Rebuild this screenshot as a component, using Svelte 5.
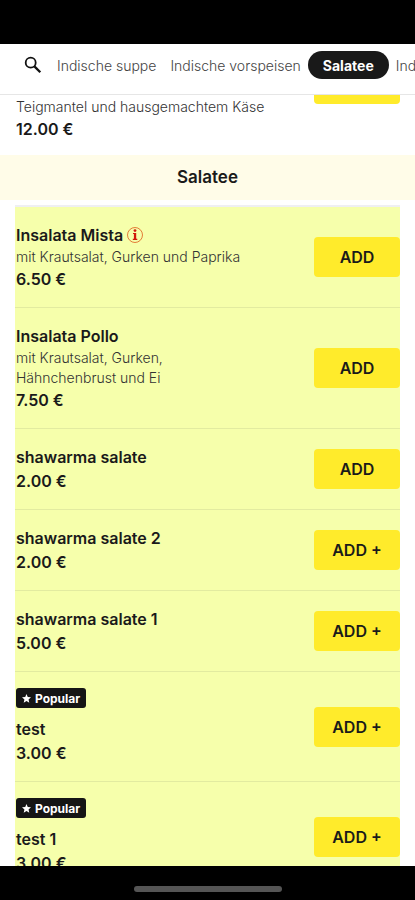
<script>
  const categories = ['Indische suppe', 'Indische vorspeisen', 'Salatee', 'Indische reis']
  let active = $state('Salatee')

  const items = [
    { name: 'Insalata Mista', description: 'mit Krautsalat, Gurken und Paprika', price: '6.50 €', info: true },
    { name: 'Insalata Pollo', description: 'mit Krautsalat, Gurken, Hähnchenbrust und Ei', price: '7.50 €' },
    { name: 'shawarma salate', price: '2.00 €' },
    { name: 'shawarma salate 2', price: '2.00 €', options: true },
    { name: 'shawarma salate 1', price: '5.00 €', options: true },
    { name: 'test', price: '3.00 €', options: true, popular: true },
    { name: 'test 1', price: '3.00 €', options: true, popular: true }
  ]
</script>

<div class="screen">
  <div class="status-bar"></div>

  <nav aria-label="Categories">
    <button class="search" aria-label="Search">
      <svg width="18" height="18" viewBox="0 0 18 18" fill="none" stroke="#111" aria-hidden="true">
        <circle cx="6.7" cy="6.7" r="5" stroke-width="1.8" />
        <path d="M10.4 10.4L16.3 16.3" stroke-width="2.3" />
      </svg>
    </button>
    {#each categories as category}
      <button
        class="category"
        class:active={active === category}
        aria-pressed={active === category}
        onclick={() => (active = category)}
      >
        {category}
      </button>
    {/each}
  </nav>

  <main>
    <article class="previous">
      <div class="details">
        <p class="description">Teigmantel und hausgemachtem Käse</p>
        <p class="price">12.00 €</p>
      </div>
      <button class="add" aria-label="Add"></button>
    </article>

    <h2>Salatee</h2>

    <ul>
      {#each items as item}
        <li>
          <div class="details">
            {#if item.popular}
              <span class="badge">
                <svg width="9" height="9" viewBox="0 0 10 10" fill="#fff" aria-hidden="true">
                  <path d="M5 0l1.4 3.4 3.6.3-2.7 2.4.8 3.6L5 7.8 1.9 9.7l.8-3.6L0 3.7l3.6-.3z" />
                </svg>
                Popular
              </span>
            {/if}
            <h3>
              {item.name}
              {#if item.info}
                <button class="info" aria-label="Product information">
                  <svg width="16" height="16" viewBox="0 0 16 16" aria-hidden="true">
                    <circle cx="8" cy="8" r="7.5" fill="none" stroke="#dd5a1c" stroke-width="0.8" />
                    <circle cx="8" cy="3.6" r="1.4" fill="#d01a0c" />
                    <path d="M6 5.9H9.2v5.9h1.1v1.1H5.8v-1.1H6.9V7H6z" fill="#d01a0c" />
                  </svg>
                </button>
              {/if}
            </h3>
            {#if item.description}
              <p class="description">{item.description}</p>
            {/if}
            <p class="price">{item.price}</p>
          </div>
          <button class="add">{item.options ? 'ADD +' : 'ADD'}</button>
        </li>
      {/each}
    </ul>
  </main>

  <div class="home-bar"><span></span></div>
</div>

<style>
  :global(body) {
    margin: 0;
    background: #fff;
  }

  .screen {
    display: flex;
    flex-direction: column;
    height: 100vh;
    font-family: Inter, 'Liberation Sans', sans-serif;
    color: #1a1a1a;
    background: #fff;
  }

  button {
    border: 0;
    padding: 0;
    background: none;
    font: inherit;
    color: inherit;
    cursor: pointer;
  }

  .status-bar {
    flex: none;
    height: 44px;
    background: #000;
  }

  nav {
    flex: none;
    display: flex;
    align-items: flex-start;
    padding: 7px 0 15px 24px;
    border-bottom: 1px solid #e6e6e6;
    overflow: hidden;
  }

  .search {
    flex: none;
    display: flex;
    align-items: center;
    height: 28px;
    margin-right: 8px;
  }

  .category {
    flex: none;
    height: 28px;
    padding: 0 7px;
    border-radius: 14px;
    font-size: 14px;
    font-weight: 300;
    color: #444;
    white-space: nowrap;
  }

  .category.active {
    padding: 0 15px;
    background: #191919;
    color: #fff;
    font-weight: 700;
  }

  main {
    flex: 1;
    min-height: 0;
    overflow: hidden;
  }

  p,
  h2,
  h3,
  ul {
    margin: 0;
    padding: 0;
  }

  .previous {
    display: flex;
    align-items: flex-start;
    justify-content: space-between;
    padding: 2px 15px 14px 16px;
  }

  .previous .add {
    margin-top: -33px;
  }

  h2 {
    padding: 10px 16px 11px;
    background: #fffce8;
    font-size: 17px;
    font-weight: 600;
    line-height: 24px;
    text-align: center;
  }

  ul {
    margin: 5px 15px 0;
    border-top: 2px solid #efeff2;
    list-style: none;
    background: #f6ffab;
  }

  li {
    display: flex;
    align-items: center;
    justify-content: space-between;
    padding: 16px 0 16px 1px;
    border-bottom: 1px solid #e2eba0;
  }

  .details {
    max-width: 280px;
  }

  li .details {
    max-width: 240px;
  }

  h3 {
    display: flex;
    align-items: center;
    gap: 4px;
    font-size: 16px;
    font-weight: 600;
    line-height: 24px;
  }

  .info {
    display: flex;
  }

  .description {
    font-size: 14px;
    font-weight: 300;
    line-height: 20px;
    color: #333;
  }

  .price {
    font-size: 16px;
    font-weight: 600;
    line-height: 24px;
  }

  .badge {
    display: flex;
    align-items: center;
    gap: 4px;
    width: max-content;
    height: 20px;
    margin-bottom: 9px;
    padding: 0 6px;
    border-radius: 3px;
    background: #151515;
    color: #fff;
    font-size: 12px;
    font-weight: 700;
  }

  .add {
    flex: none;
    width: 86px;
    height: 40px;
    border-radius: 4px;
    background: #ffeb2b;
    font-size: 16px;
    font-weight: 600;
  }

  .home-bar {
    flex: none;
    display: flex;
    justify-content: center;
    align-items: center;
    height: 34px;
    background: #000;
  }

  .home-bar span {
    width: 148px;
    height: 6px;
    margin-top: 12px;
    border-radius: 3px;
    background: #555;
  }
</style>
